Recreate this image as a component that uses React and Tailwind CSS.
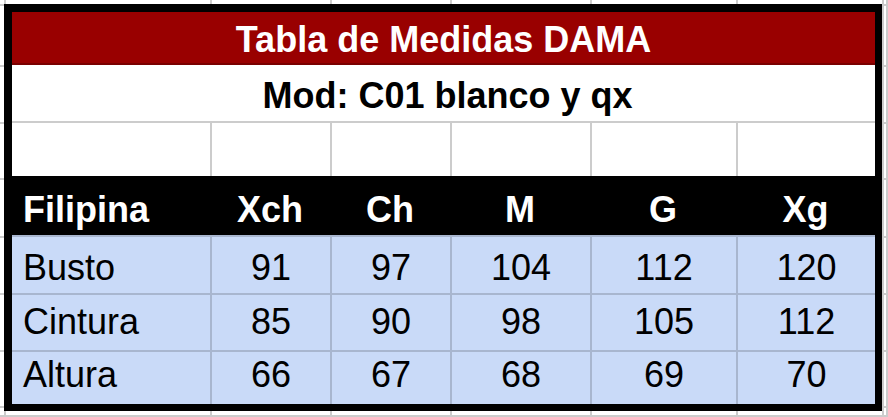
import React from "react";

const bgCols = 8;
const bgRows = 9;

const headers = ["Xch", "Ch", "M", "G", "Xg"];
const rows = [
  { name: "Busto", vals: ["91", "97", "104", "112", "120"], h: "h-[58px]", pb: "pb-[7.5px]" },
  { name: "Cintura", vals: ["85", "90", "98", "105", "112"], h: "h-[57px]", pb: "pb-[10px]" },
  { name: "Altura", vals: ["66", "67", "68", "69", "70"], h: "h-[54px]", pb: "pb-[11px]" },
];

const cols = "grid grid-cols-[198px_120px_120px_140px_146px_139px]";

export default function App() {
  return (
    <div
      className="grid w-[888px] h-[417px] bg-white overflow-hidden"
      style={{ fontFamily: '"Liberation Sans", Arial, sans-serif' }}
    >
      {/* sheet gridlines behind */}
      <div className="col-start-1 row-start-1 grid grid-cols-[6px_206px_120px_120px_140px_146px_146px_1fr] grid-rows-[6px_61px_57px_56px_58px_57px_57px_56px_1fr] h-[417px]">
        {Array.from({ length: bgCols * bgRows }).map((_, i) => (
          <div key={i} className="border-r-2 border-b-2 border-[#cccccc]" />
        ))}
      </div>

      {/* table */}
      <div className="col-start-1 row-start-1 ml-[4px] mt-[4px] w-[878px] h-[407px] border-l-[8px] border-t-[8px] border-r-[7px] border-b-[7px] border-black flex flex-col bg-white">
        <div className="h-[53px] bg-[#990000] border-b-2 border-[#7a0000] flex items-end justify-center pb-[5.5px]">
          <span className="text-[36px] leading-[36px] font-bold text-white">Tabla de Medidas DAMA</span>
        </div>
        <div className="h-[58px] bg-white border-b-2 border-[#cccccc] flex items-end justify-center pb-[7.5px] pl-[8px]">
          <span className="text-[36px] leading-[36px] font-bold text-black">Mod: C01 blanco y qx</span>
        </div>
        <div className={`${cols} h-[53px] bg-white`}>
          <div />
          <div className="border-l-2 border-[#cccccc]" />
          <div className="border-l-2 border-[#cccccc]" />
          <div className="border-l-2 border-[#cccccc]" />
          <div className="border-l-2 border-[#cccccc]" />
          <div className="border-l-2 border-[#cccccc]" />
        </div>
        <div className={`${cols} h-[59px] bg-black text-white font-bold text-[36px] leading-[36px]`}>
          <div className="flex items-end pl-[11px] pb-[7.5px]">Filipina</div>
          {headers.map((h) => (
            <div key={h} className="flex items-end justify-center pb-[7.5px]">
              {h}
            </div>
          ))}
        </div>
        {rows.map((r) => (
          <div
            key={r.name}
            className={`${cols} ${r.h} bg-[#c9daf8] border-t-2 border-[#a8b6cf] text-black text-[36px] leading-[36px]`}
          >
            <div className={`flex items-end pl-[11px] ${r.pb}`}>{r.name}</div>
            {r.vals.map((v, i) => (
              <div
                key={i}
                className={`flex items-end justify-center border-l-2 border-[#a8b6cf] ${r.pb}`}
              >
                {v}
              </div>
            ))}
          </div>
        ))}
      </div>
    </div>
  );
}
